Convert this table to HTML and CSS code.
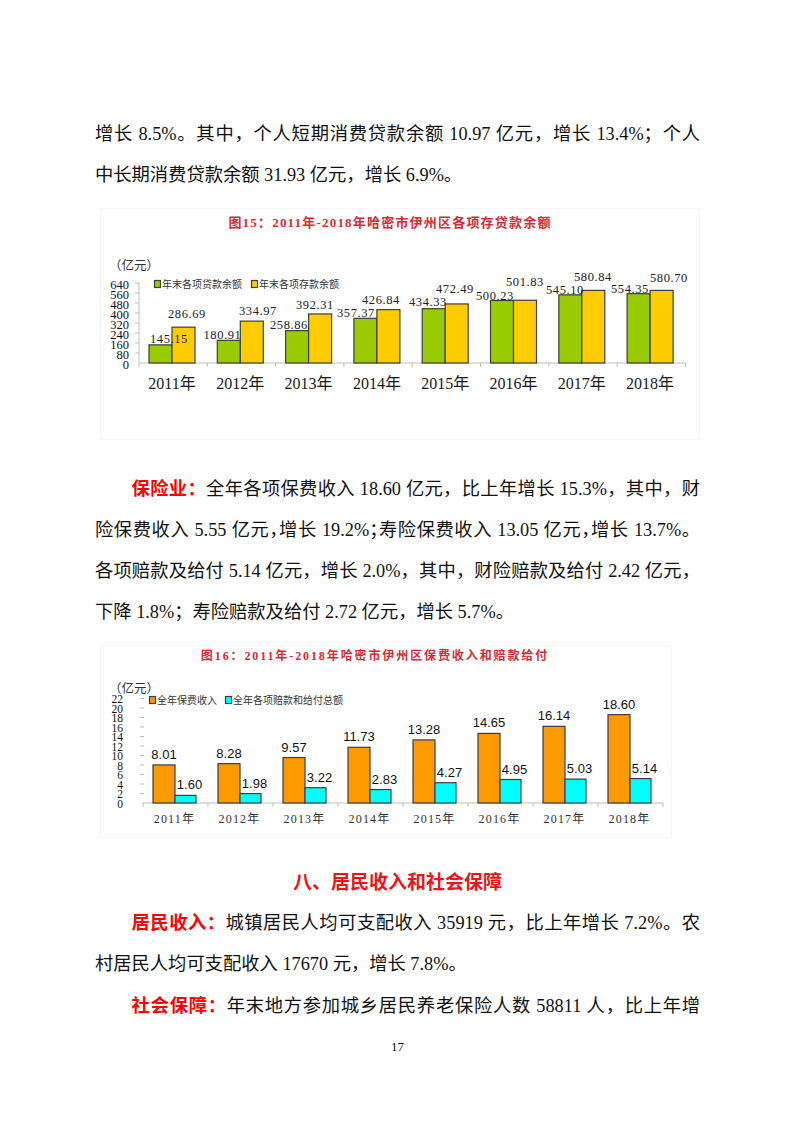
FILE: index.html
```html
<!DOCTYPE html>
<html lang="zh-CN">
<head>
<meta charset="utf-8">
<title>17</title>
<link rel="stylesheet" href="styles.css">
</head>
<body>
<div class="page">
  <p class="para">
    <span class="ln j">增长 8.5%。其中，个人短期消费贷款余额 10.97 亿元，增长 13.4%；个人</span>
    <span class="ln">中长期消费贷款余额 31.93 亿元，增长 6.9%。</span>
  </p>

  <figure class="fig fig1">
    <svg width="600" height="232" viewBox="0 0 600 232">
      <rect class="frame" x="0.5" y="0.5" width="599" height="231"/>
      <text class="ttl t1" x="290" y="19">图15：2011年-2018年哈密市伊州区各项存贷款余额</text>
      <text class="unit" x="9" y="62">（亿元）</text>
      <g class="ylab">
        <text x="29" y="80.5">640</text><text x="29" y="90.5">560</text><text x="29" y="100.5">480</text>
        <text x="29" y="110.5">400</text><text x="29" y="120.5">320</text><text x="29" y="130.5">240</text>
        <text x="29" y="140.5">160</text><text x="29" y="150.5">80</text><text x="29" y="160.5">0</text>
      </g>
      <g class="axis">
        <line x1="39" y1="75" x2="39" y2="155"/>
        <line x1="35" y1="75" x2="39" y2="75"/><line x1="35" y1="85" x2="39" y2="85"/><line x1="35" y1="95" x2="39" y2="95"/>
        <line x1="35" y1="105" x2="39" y2="105"/><line x1="35" y1="115" x2="39" y2="115"/><line x1="35" y1="125" x2="39" y2="125"/>
        <line x1="35" y1="135" x2="39" y2="135"/><line x1="35" y1="145" x2="39" y2="145"/>
        <line x1="39" y1="155" x2="585.4" y2="155"/>
        <line x1="39" y1="155" x2="39" y2="159"/><line x1="107.3" y1="155" x2="107.3" y2="159"/><line x1="175.6" y1="155" x2="175.6" y2="159"/>
        <line x1="243.9" y1="155" x2="243.9" y2="159"/><line x1="312.2" y1="155" x2="312.2" y2="159"/><line x1="380.5" y1="155" x2="380.5" y2="159"/>
        <line x1="448.8" y1="155" x2="448.8" y2="159"/><line x1="517.1" y1="155" x2="517.1" y2="159"/><line x1="585.4" y1="155" x2="585.4" y2="159"/>
      </g>
      <g class="bar green">
        <rect x="49" y="136.86" width="23" height="18.14"/>
        <rect x="117.3" y="132.39" width="23" height="22.61"/>
        <rect x="185.6" y="122.64" width="23" height="32.36"/>
        <rect x="253.9" y="110.33" width="23" height="44.67"/>
        <rect x="322.2" y="100.71" width="23" height="54.29"/>
        <rect x="390.5" y="92.47" width="23" height="62.53"/>
        <rect x="458.8" y="86.86" width="23" height="68.14"/>
        <rect x="527.1" y="85.71" width="23" height="69.29"/>
      </g>
      <g class="bar yellow">
        <rect x="72" y="119.16" width="23" height="35.84"/>
        <rect x="140.3" y="113.13" width="23" height="41.87"/>
        <rect x="208.6" y="105.96" width="23" height="49.04"/>
        <rect x="276.9" y="101.64" width="23" height="53.36"/>
        <rect x="345.2" y="95.94" width="23" height="59.06"/>
        <rect x="413.5" y="92.27" width="23" height="62.73"/>
        <rect x="481.8" y="82.39" width="23" height="72.61"/>
        <rect x="550.1" y="82.41" width="23" height="72.59"/>
      </g>
      <g class="vlab1">
        <text x="69" y="135">145.15</text>
        <text x="87" y="110">286.69</text>
        <text x="122.5" y="131">180.91</text>
        <text x="158" y="107">334.97</text>
        <text x="189" y="121">258.86</text>
        <text x="215" y="101">392.31</text>
        <text x="256" y="109">357.37</text>
        <text x="281" y="96">426.84</text>
        <text x="328" y="98">434.33</text>
        <text x="355" y="85">472.49</text>
        <text x="395" y="92">500.23</text>
        <text x="425" y="78">501.83</text>
        <text x="465" y="86">545.10</text>
        <text x="493" y="73">580.84</text>
        <text x="530" y="85">554.35</text>
        <text x="569" y="74">580.70</text>
      </g>
      <g class="xlab1">
        <text x="72" y="181">2011年</text>
        <text x="140.3" y="181">2012年</text>
        <text x="208.6" y="181">2013年</text>
        <text x="276.9" y="181">2014年</text>
        <text x="345.2" y="181">2015年</text>
        <text x="413.5" y="181">2016年</text>
        <text x="481.8" y="181">2017年</text>
        <text x="550.1" y="181">2018年</text>
      </g>
      <g class="legend">
        <rect class="green" x="54.5" y="72.5" width="6" height="7"/>
        <text x="62" y="80">年末各项贷款余额</text>
        <rect class="yellow" x="151.5" y="72.5" width="6" height="7"/>
        <text x="159" y="80">年末各项存款余额</text>
      </g>
    </svg>
  </figure>

  <p class="para p2">
    <span class="ln j ind"><span class="hl">保险业：</span>全年各项保费收入 18.60 亿元，比上年增长 15.3%，其中，财</span>
    <span class="ln j">险保费收入 5.55 亿元<span class="half">，</span>增长 19.2%<span class="half">；</span>寿险保费收入 13.05 亿元<span class="half">，</span>增长 13.7%。</span>
    <span class="ln j">各项赔款及给付 5.14 亿元，增长 2.0%，其中，财险赔款及给付 2.42 亿元，</span>
    <span class="ln">下降 1.8%；寿险赔款及给付 2.72 亿元，增长 5.7%。</span>
  </p>

  <figure class="fig fig2">
    <svg width="572" height="193" viewBox="0 0 572 193">
      <rect class="frame" x="0.5" y="0.5" width="571" height="192"/>
      <text class="ttl t2" x="275" y="15">图16：2011年-2018年哈密市伊州区保费收入和赔款给付</text>
      <text class="unit" x="9" y="47.5">（亿元）</text>
      <g class="ylab2">
        <text x="23" y="58">22</text><text x="23" y="67.5">20</text><text x="23" y="77">18</text>
        <text x="23" y="86.5">16</text><text x="23" y="96">14</text><text x="23" y="105.5">12</text>
        <text x="23" y="115">10</text><text x="23" y="124.5">8</text><text x="23" y="134">6</text>
        <text x="23" y="143.5">4</text><text x="23" y="153">2</text><text x="23" y="162.5">0</text>
      </g>
      <g class="axis">
        <line x1="40" y1="53.5" x2="44" y2="53.5"/><line x1="40" y1="63" x2="44" y2="63"/><line x1="40" y1="72.5" x2="44" y2="72.5"/>
        <line x1="40" y1="82" x2="44" y2="82"/><line x1="40" y1="91.5" x2="44" y2="91.5"/><line x1="40" y1="101" x2="44" y2="101"/>
        <line x1="40" y1="110.5" x2="44" y2="110.5"/><line x1="40" y1="120" x2="44" y2="120"/><line x1="40" y1="129.5" x2="44" y2="129.5"/>
        <line x1="40" y1="139" x2="44" y2="139"/><line x1="40" y1="148.5" x2="44" y2="148.5"/>
        <line x1="43" y1="158" x2="563" y2="158"/>
        <line x1="43" y1="158" x2="43" y2="162"/><line x1="108" y1="158" x2="108" y2="162"/><line x1="173" y1="158" x2="173" y2="162"/>
        <line x1="238" y1="158" x2="238" y2="162"/><line x1="303" y1="158" x2="303" y2="162"/><line x1="368" y1="158" x2="368" y2="162"/>
        <line x1="433" y1="158" x2="433" y2="162"/><line x1="498" y1="158" x2="498" y2="162"/><line x1="563" y1="158" x2="563" y2="162"/>
      </g>
      <g class="bar orange">
        <rect x="53" y="119.95" width="22" height="38.05"/>
        <rect x="118" y="118.67" width="22" height="39.33"/>
        <rect x="183" y="112.54" width="22" height="45.46"/>
        <rect x="248" y="102.28" width="22" height="55.72"/>
        <rect x="313" y="94.92" width="22" height="63.08"/>
        <rect x="378" y="88.41" width="22" height="69.59"/>
        <rect x="443" y="81.33" width="22" height="76.67"/>
        <rect x="508" y="69.65" width="22" height="88.35"/>
      </g>
      <g class="bar cyan">
        <rect x="75" y="150.4" width="21" height="7.6"/>
        <rect x="140" y="148.59" width="21" height="9.41"/>
        <rect x="205" y="142.7" width="21" height="15.3"/>
        <rect x="270" y="144.56" width="21" height="13.44"/>
        <rect x="335" y="137.72" width="21" height="20.28"/>
        <rect x="400" y="134.49" width="21" height="23.51"/>
        <rect x="465" y="134.11" width="21" height="23.89"/>
        <rect x="530" y="133.58" width="21" height="24.42"/>
      </g>
      <g class="vlab2">
        <text x="64" y="113.9">8.01</text>
        <text x="129" y="112.7">8.28</text>
        <text x="194" y="106.5">9.57</text>
        <text x="259" y="96.3">11.73</text>
        <text x="324" y="88.9">13.28</text>
        <text x="389" y="82.4">14.65</text>
        <text x="454" y="75.3">16.14</text>
        <text x="519" y="63.6">18.60</text>
        <text x="89.5" y="144.4">1.60</text>
        <text x="154.5" y="142.6">1.98</text>
        <text x="219.5" y="136.7">3.22</text>
        <text x="284.5" y="138.6">2.83</text>
        <text x="349.5" y="131.7">4.27</text>
        <text x="414.5" y="128.5">4.95</text>
        <text x="479.5" y="128.1">5.03</text>
        <text x="544.5" y="127.6">5.14</text>
      </g>
      <g class="xlab2">
        <text x="74.5" y="178">2011年</text>
        <text x="139.5" y="178">2012年</text>
        <text x="204.5" y="178">2013年</text>
        <text x="269.5" y="178">2014年</text>
        <text x="334.5" y="178">2015年</text>
        <text x="399.5" y="178">2016年</text>
        <text x="464.5" y="178">2017年</text>
        <text x="529.5" y="178">2018年</text>
      </g>
      <g class="legend">
        <rect class="orange" x="49.5" y="51.5" width="6" height="7"/>
        <text x="57" y="59">全年保费收入</text>
        <rect class="cyan" x="125.5" y="51.5" width="6" height="7"/>
        <text x="133" y="59">全年各项赔款和给付总额</text>
      </g>
    </svg>
  </figure>

  <h2 class="h2">八、居民收入和社会保障</h2>

  <p class="para">
    <span class="ln j ind"><span class="hl">居民收入：</span>城镇居民人均可支配收入 35919 元，比上年增长 7.2%。农</span>
    <span class="ln">村居民人均可支配收入 17670 元，增长 7.8%。</span>
  </p>
  <p class="para p4">
    <span class="ln j ind"><span class="hl">社会保障：</span>年末地方参加城乡居民养老保险人数 58811 人，比上年增</span>
  </p>

  <div class="pn">17</div>
</div>
</body>
</html>
```

FILE: styles.css
```css
html, body {
  margin: 0;
  padding: 0;
  background: #fff;
}

body {
  font-family: "Liberation Serif", "Noto Sans CJK SC", serif;
  color: #111;
}

.page {
  width: 605px;
  padding: 114px 93px 0 95px;
}

.para {
  margin: 0;
  font-size: 18.3px;
  line-height: 41px;
}

.ln {
  display: block;
  text-align: left;
}

.ln.j {
  text-align: justify;
  text-align-last: justify;
}

.ln.ind {
  text-indent: 2em;
}

.hl {
  color: #f00;
  font-weight: bold;
}

.half {
  letter-spacing: -0.5em;
}

.fig {
  margin: 0 0 0 5px;
}

.fig svg {
  display: block;
}

.fig1 {
  margin-top: 12px;
}

.p2 {
  margin-top: 28.5px;
}

.fig2 {
  margin-top: 12.5px;
}

.h2 {
  margin: 24px 0 0;
  font-size: 19px;
  line-height: 41px;
  text-align: center;
  color: #ea1419;
  font-weight: bold;
}

.p4 {
  margin-top: 1px;
}

.pn {
  margin-top: 10px;
  font-size: 13px;
  line-height: 20px;
  text-align: center;
  color: #111;
}

/* chart styling */
.frame {
  fill: #fff;
  stroke: #f5f5f5;
  stroke-width: 1;
}

.fig text {
  font-family: "Liberation Serif", "Noto Sans CJK SC", serif;
}

.ttl {
  font-weight: bold;
  fill: #d62b36;
  text-anchor: middle;
}

.t1 {
  font-size: 13px;
  letter-spacing: 1.2px;
}

.t2 {
  font-size: 12px;
  letter-spacing: 1.9px;
}

.unit {
  font-size: 12.5px;
  fill: #333;
}

.ylab text {
  font-size: 12.5px;
  fill: #111;
  text-anchor: end;
}

.ylab2 text {
  font-size: 11.5px;
  fill: #111;
  text-anchor: end;
}

.axis line {
  stroke: #bdbdbd;
  stroke-width: 1;
}

.bar rect,
.legend rect {
  stroke: #3c3c3c;
  stroke-width: 1.2;
}

.green { fill: #99cc00; }
.yellow { fill: #ffcc00; }
.orange { fill: #ff9900; }
.cyan { fill: #00ffff; }

.vlab1 text {
  font-size: 12.5px;
  letter-spacing: 0.6px;
  fill: #222;
  text-anchor: middle;
}

.vlab2 text {
  font-family: "Liberation Sans", Arial, sans-serif;
  font-size: 13px;
  fill: #111;
  text-anchor: middle;
}

.xlab1 text {
  font-size: 16px;
  fill: #1a1a1a;
  text-anchor: middle;
}

.xlab2 text {
  font-size: 12px;
  letter-spacing: 1.2px;
  fill: #333;
  text-anchor: middle;
}

.legend text {
  font-size: 10px;
  fill: #333;
}
```
